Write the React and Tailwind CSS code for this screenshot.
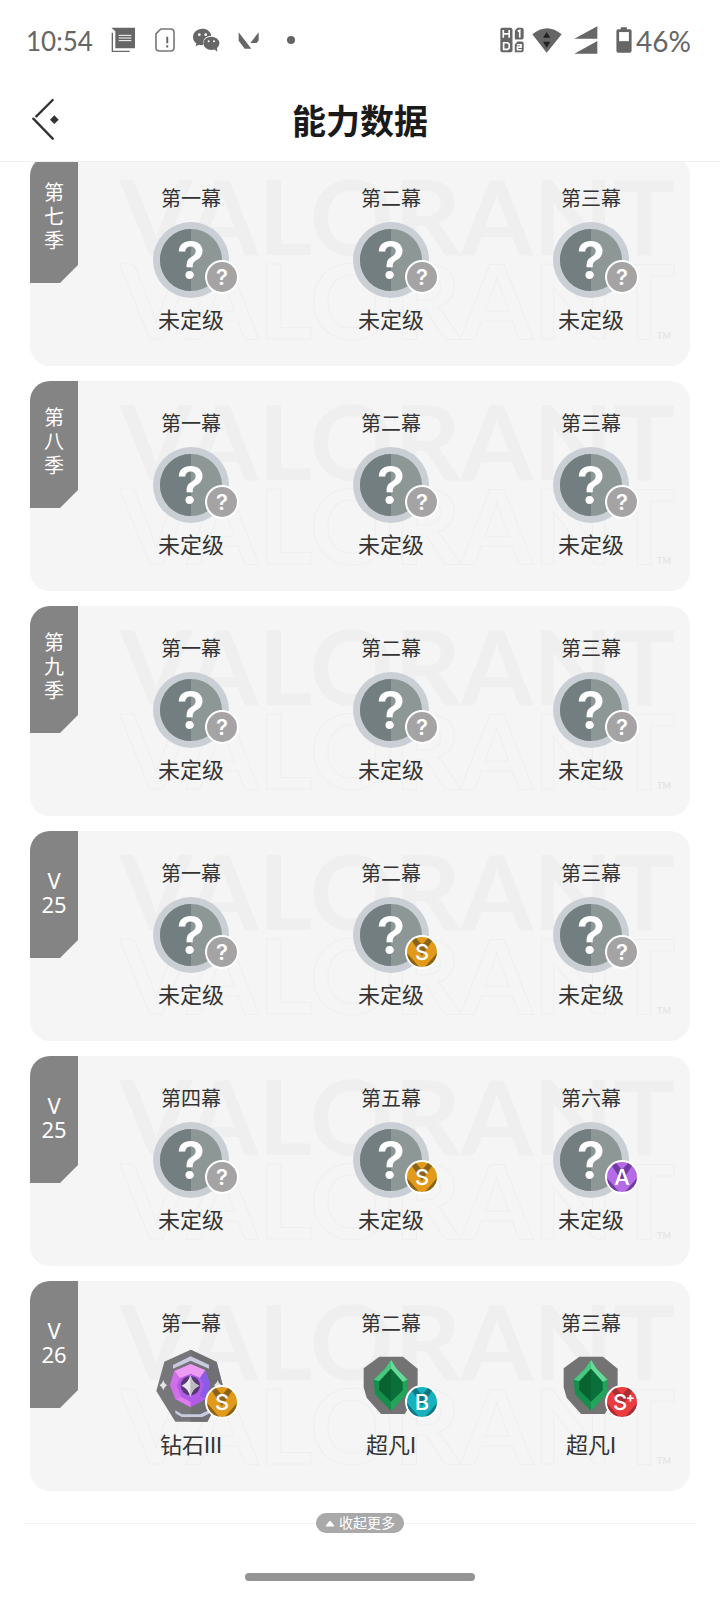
import React, { useState } from "react";

const seasons = [
    { label: ["第", "七", "季"], acts: [["第一幕"], ["第二幕"], ["第三幕"]] },
    { label: ["第", "八", "季"], acts: [["第一幕"], ["第二幕"], ["第三幕"]] },
    { label: ["第", "九", "季"], acts: [["第一幕"], ["第二幕"], ["第三幕"]] },
    { label: ["V", "25"], acts: [["第一幕"], ["第二幕", "S"], ["第三幕"]] },
    { label: ["V", "25"], acts: [["第四幕"], ["第五幕", "S"], ["第六幕", "A"]] },
    {
        label: ["V", "26"],
        acts: [
            ["第一幕", "S", "diamond", "钻石III"],
            ["第二幕", "B", "ascendant", "超凡I"],
            ["第三幕", "S+", "ascendant", "超凡I"],
        ],
    },
];

const badgeColors = {
    "?": { base: "#a5a3a3" },
    S: { base: "#e29a1a", side: "#8a6218" },
    A: { base: "#b66be6", side: "#6f3aa2" },
    B: { base: "#16b2be", side: "#0d7884" },
    "S+": { base: "#ec3c40", side: "#aa2c35" },
};

function StatusBar() {
    return (
        <div className="flex h-20 items-center justify-between pl-[26px] pr-[27px] text-[#666]">
            <div className="flex items-center">
                <span className="w-[67px] pt-px font-[Lato] text-[26px] leading-none">10:54</span>
                <svg className="ml-[18px] h-[26px] w-6" viewBox="334 87 72 78">
                    <path d="M335 89h71v62h-59v-51z" fill="#666" />
                    <path d="M338 104v56h52" fill="none" stroke="#666" strokeWidth="4" />
                    <path d="M357 112h38M357 120h38M357 128h38" stroke="#fff" strokeWidth="3" />
                </svg>
                <svg className="ml-5 h-[26px] w-5" viewBox="464 86 62 78">
                    <path d="M482 91h30q11 0 11 11v46q0 11-11 11h-34q-11 0-11-11v-42z" fill="none" stroke="#777" strokeWidth="5" strokeLinejoin="round" />
                    <path d="M502 115v20M502 141v7" stroke="#666" strokeWidth="6" />
                </svg>
                <svg className="ml-[18px] h-6 w-[27px]" viewBox="581 88 81 72">
                    <path d="M609 90c-16 0-28 11-28 25 0 8 4 15 10 19l-2 9 10-5c4 1 8 2 12 1-2-17 9-28 25-28-2-13-13-21-27-21z" fill="#666" />
                    <ellipse cx="636" cy="134" rx="24" ry="20" fill="#666" />
                    <path d="M644 151l10 8-1-12z" fill="#666" />
                    <g fill="#fff">
                        <circle cx="600" cy="108" r="4" /><circle cx="619" cy="108" r="4" />
                        <circle cx="628" cy="128" r="3" /><circle cx="644" cy="128" r="3" />
                    </g>
                </svg>
                <svg className="ml-[18px] h-[17px] w-[21px]" viewBox="715 100 63 51">
                    <path d="M717 101l38 49h-20l-18-24zM777 101v24l-6 8h-19z" fill="#666" />
                </svg>
                <span className="ml-7 size-2 rounded-full bg-[#666]" />
            </div>
            <div className="flex items-center">
                <svg className="h-[26px] w-6" viewBox="418 86 73 77">
                    <rect x="419" y="87" width="37" height="75" rx="6" fill="#666" />
                    <path d="M463 96l8-9h13q6 0 6 6v24q0 6-6 6h-21zM463 138l8-9h13q6 0 6 6v21q0 6-6 6h-21z" fill="#666" />
                    <path d="M428 94v24M446 94v24M428 106h18M429 133v20h12l5-4v-12l-5-4zM472 98l6-3v22M469 139h13v7h-11v8h13" fill="none" stroke="#fff" strokeWidth="5" />
                </svg>
                <svg className="ml-2 h-[25px] w-[30px]" viewBox="515 83 90 75">
                    <path d="M516 102q44-36 88 0l-45 55z" fill="#666" />
                    <path d="M559 95l11 17h-22zM559 142l11-18h-22z" fill="#222" />
                </svg>
                <svg className="ml-3 h-7 w-6" viewBox="642 81 70 84">
                    <path d="M711 82v37h-69zM711 126v38h-69z" fill="#666" />
                </svg>
                <svg className="ml-[18px] h-[26px] w-4" viewBox="767 83 47 77">
                    <path d="M781 84h18v6h9q5 0 5 5v58q0 6-6 6h-33q-6 0-6-6V95q0-5 5-5h8z" fill="#666" />
                    <path d="M776 98h29v27h-29z" fill="#fff" />
                </svg>
                <span className="ml-1 w-[57px] pt-px font-[Lato] text-[28px] leading-none">46%</span>
            </div>
        </div>
    );
}

function Watermark() {
    return (
        <svg className="pointer-events-none absolute right-0 top-0 h-[210px] w-[582px]" viewBox="0 0 582 210" aria-hidden="true">
            <g className="font-[Lato] font-bold" fontSize="104">
                <text x="12" y="99" fill="#efefef">VALORANT</text>
                <text x="12" y="183" fill="none" stroke="#efefef" strokeWidth="1">VALORANT</text>
            </g>
            <text x="549" y="183" fontSize="9" fill="#e6e6e6" className="font-[Lato] font-bold">TM</text>
        </svg>
    );
}

function Unranked() {
    return (
        <svg className="size-[76px]" viewBox="0 0 76 76">
            <circle cx="38" cy="38" r="38" fill="#c9cfd5" />
            <circle cx="38" cy="38" r="31" fill="#8d9796" />
            <path d="M38 7a31 31 0 0 0 0 62z" fill="#737e81" />
            <text x="38" y="57" textAnchor="middle" fontSize="52" fill="#fff" className="font-[Inter] font-semibold">?</text>
        </svg>
    );
}

function Diamond() {
    return (
        <svg className="size-[76px]" viewBox="159 198 228 228">
            <path d="M272 206l78 37 22 85-50 94h-96l-57-92 24-88z" fill="#77777b" />
            <path d="M272 206l78 37 22 85-50 94h-50z" fill="#707074" />
            <path d="M219 252l53-26 55 25v12l-55-24-53 24z" fill="#c9cbe0" />
            <path d="M226 388l20 12h54l27-12v10l-20 10h-62l-19-11z" fill="#c9cbe0" />
            <path d="M272 249l44 19 14 42-12 44-46 25-46-25-16-42 13-42z" fill="#b15be6" />
            <path d="M272 249l44 19-16 22-28-12-32 14-17-22z" fill="#ee9bf4" />
            <path d="M223 270l17 22-10 22 14 33-18 7-16-42z" fill="#cf70e8" />
            <path d="M316 268l14 42-12 44-18-10 12-32-12-22z" fill="#8a5be8" />
            <path d="M226 354l18-7 28 17v15z" fill="#e07bee" />
            <circle cx="271" cy="314" r="29" fill="#593777" />
            <path d="M271 282q6 24 27 32-21 8-27 34-6-26-27-34 21-8 27-32z" fill="#e8e8ea" />
            <path d="M271 282q6 24 27 32-21 8-27 34z" fill="#bcbbc0" />
            <path d="M190 298q3 11 11 15-8 4-11 15-3-11-11-15 8-4 11-15zM353 298q3 11 11 15-8 4-11 15-3-11-11-15 8-4 11-15z" fill="#e4e4e4" />
        </svg>
    );
}

function Ascendant() {
    return (
        <svg className="size-[76px]" viewBox="759 198 228 228">
            <path d="M838 227h71l44 36v73l-39 63h-71l-43-49-9-31v-57z" fill="#737373" />
            <path d="M873 236l17 27 33 33-3 44-47 50-48-50-4-44 34-33z" fill="#168f4c" />
            <path d="M873 236l17 27 33 33-15 7-35-40z" fill="#67d898" />
            <path d="M873 236l-18 27-34 33 17 5 35-38z" fill="#48c77e" />
            <path d="M923 296l-3 44-47 50v-28l35-34v-25z" fill="#24a45b" />
            <path d="M873 263l-35 38-1 26 36 35z" fill="#086331" />
            <path d="M873 263l35 40v25l-35 34z" fill="#087038" />
        </svg>
    );
}

function Badge({ grade }) {
    const c = badgeColors[grade];
    const unknown = grade === "?";
    return (
        <svg className="absolute left-[52px] top-[38px] size-[34px]" viewBox="0 0 34 34">
            <circle cx="17" cy="17" r="17" fill="#fff" />
            <circle cx="17" cy="17" r="15" fill={c.base} />
            {!unknown && (
                <>
                    <path d="M7 6l4-3h12l4 3-10 15z" fill={c.side} />
                    <path d="M11 3h12l-6 7z" fill={c.base} />
                    <path d="M2 18l12 13.700a15 15 0 0 1-12-13.700zM32 18L20 31.700a15 15 0 0 0 12-13.700z" fill={c.side} />
                </>
            )}
            <text x={grade === "S+" ? 15 : 17} y="25" textAnchor="middle" fontSize="22" fill="#fff" className={unknown ? "font-[Inter] font-semibold" : "font-[Inter] font-medium"}>
                {grade[0]}
            </text>
            {grade === "S+" && <text x="21" y="17" fontSize="13" fill="#fff" className="font-[Inter] font-bold">+</text>}
        </svg>
    );
}

function Act({ name, grade = "?", rank, title = "未定级" }) {
    return (
        <div className="flex flex-col items-center pt-7 text-[#333]">
            <span className="text-[20px] leading-[30px]">{name}</span>
            <div className="relative mt-2 size-[76px]">
                {rank === "diamond" ? <Diamond /> : rank === "ascendant" ? <Ascendant /> : <Unranked />}
                <Badge grade={grade} />
            </div>
            <span className="mt-2 font-['Roboto','Noto_Sans_CJK_SC',sans-serif] text-[22px] leading-[30px]">{title}</span>
        </div>
    );
}

function SeasonCard({ season }) {
    return (
        <section className="relative flex h-[210px] overflow-hidden rounded-[20px] bg-[#f5f5f5]">
            <Watermark />
            <div className="relative h-[127px] w-12 shrink-0 bg-[#848484] text-center leading-6 text-white [clip-path:polygon(0_0,100%_0,100%_109px,30px_100%,0_100%)]">
                <div className={season.label.length === 2 ? "pt-[37px] text-[22px]" : "pt-[25px] text-[20px]"}>
                    {season.label.map((ch) => <div key={ch}>{ch}</div>)}
                </div>
            </div>
            <div className="relative -mr-px ml-[13px] grid flex-1 grid-cols-3">
                {season.acts.map(([name, grade, rank, title]) => (
                    <Act key={name} name={name} grade={grade} rank={rank} title={title} />
                ))}
            </div>
        </section>
    );
}

export default function App() {
    const [expanded, setExpanded] = useState(true);
    const shown = expanded ? seasons : seasons.slice(-1);

    return (
        <div className="min-h-screen bg-white font-['Noto_Sans','Noto_Sans_CJK_SC',sans-serif]">
            <header className="sticky top-0 z-10 border-b border-[#f0f0f0] bg-white">
                <StatusBar />
                <div className="relative flex h-[81px] items-center justify-center">
                    <button type="button" aria-label="返回" className="absolute left-8 top-[18px]">
                        <svg className="h-[42px] w-7" viewBox="98 292 84 126">
                            <path d="M160 298l-49 49M102 354l58 60" fill="none" stroke="#333" strokeWidth="7" strokeLinecap="round" />
                            <path d="M165 344l13 13-13 13-13-13z" fill="#333" />
                        </svg>
                    </button>
                    <h1 className="text-[34px] font-bold leading-none text-[#1a1a1a]">能力数据</h1>
                </div>
            </header>

            <main className="-mt-[6px] space-y-[15px] px-[30px]">
                {shown.map((season, i) => <SeasonCard key={i} season={season} />)}
            </main>

            <footer className="pt-[22px]">
                <div className="flex items-center px-6">
                    <span className="h-px flex-1 bg-[#f2f2f2]" />
                    <button
                        type="button"
                        className="flex h-5 w-22 items-center justify-center gap-1 rounded-full bg-[#a9a9a9] text-[14px] leading-5 text-white"
                        onClick={() => setExpanded(!expanded)}
                    >
                        <svg className="h-[7px] w-[10px]" viewBox="0 0 10 7">
                            <path d="M5 1l4 5H1z" fill="#fff" stroke="#fff" strokeLinejoin="round" />
                        </svg>
                        收起更多
                    </button>
                    <span className="h-px flex-1 bg-[#f2f2f2]" />
                </div>
                <div className="mx-auto mt-10 h-2 w-[230px] rounded-full bg-[#949494]" />
            </footer>
        </div>
    );
}
